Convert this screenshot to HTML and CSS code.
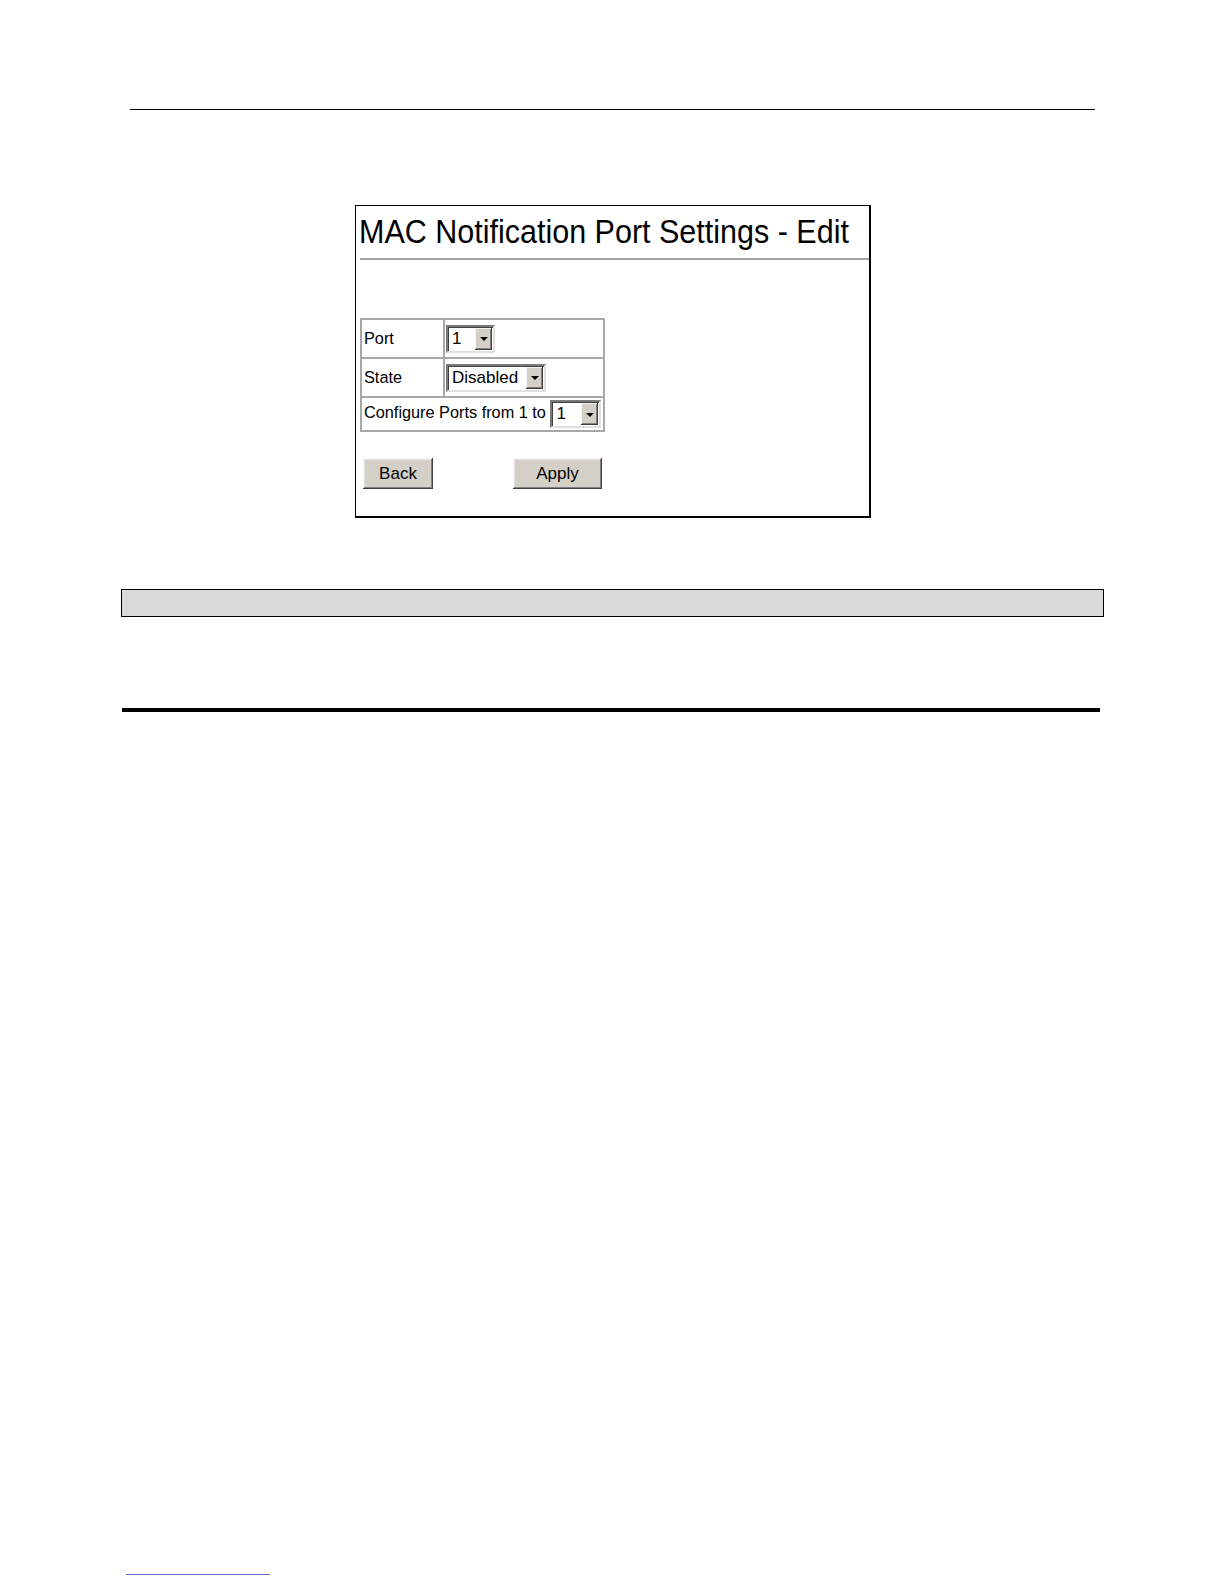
FILE: index.html
```html
<!DOCTYPE html>
<html>
<head>
<meta charset="utf-8">
<title>MAC Notification Port Settings - Edit</title>
<link rel="stylesheet" href="styles.css">
</head>
<body>
<div class="page">
  <div class="toprule"></div>
  <div class="shot">
    <div class="title">MAC Notification Port Settings - Edit</div>
    <div class="title-rule"></div>
    <table class="form">
      <tr class="r1">
        <td class="lbl">Port</td>
        <td class="val"><span class="sel sel-port"><span class="sel-text">1</span><span class="sel-btn"><span class="tri"></span></span></span></td>
      </tr>
      <tr class="r2">
        <td class="lbl">State</td>
        <td class="val"><span class="sel sel-state"><span class="sel-text">Disabled</span><span class="sel-btn"><span class="tri"></span></span></span></td>
      </tr>
      <tr class="r3">
        <td class="cfg" colspan="2">Configure Ports from 1 to <span class="sel sel-cfg"><span class="sel-text">1</span><span class="sel-btn"><span class="tri"></span></span></span></td>
      </tr>
    </table>
    <div class="buttons">
      <button class="btn btn-back">Back</button>
      <button class="btn btn-apply">Apply</button>
    </div>
  </div>
  <div class="bar"></div>
  <div class="rule-thick"></div>
  <div class="footnote-rule"></div>
</div>
</body>
</html>
```
FILE: styles.css
```css
body {
  margin: 0;
  background: #fff;
  font-family: "Liberation Sans", Arial, sans-serif;
  color: #000;
}
.page {
  padding-top: 109px;
}
.toprule {
  margin-left: 130px;
  width: 965px;
  height: 1px;
  background: #000;
}
.shot {
  margin: 95px 0 0 355px;
  width: 516px;
  height: 313px;
  box-sizing: border-box;
  border: 1px solid #000;
  border-right-width: 2px;
  border-bottom-width: 2px;
}
.title {
  font-size: 30.5px;
  line-height: 28px;
  padding: 9px 0 0 3px;
  white-space: nowrap;
  transform: scaleY(1.08);
  transform-origin: 0 0;
}
.title-rule {
  margin: 15px 0 0 4px;
  height: 2px;
  background: #a4a4a4;
}
.form {
  margin: 58px 0 0 4px;
  border-collapse: separate;
  border-spacing: 0;
  border: 1px solid #a8a8a8;
  font-size: 16.3px;
}
.form td {
  border: 1px solid #a8a8a8;
  padding: 0 0 0 2px;
  vertical-align: middle;
  box-sizing: border-box;
  white-space: nowrap;
}
.r1 td { height: 39px; }
.r2 td { height: 39px; }
.r3 td { height: 34px; }
.form td.lbl { width: 83px; }
.form td.val { width: 160px; padding-left: 1px; }
.sel {
  display: inline-flex;
  vertical-align: middle;
  height: 28px;
  box-sizing: border-box;
  background: #fff;
  border-style: solid;
  border-width: 2px;
  border-color: #7a7a7a #e0e0e0 #e0e0e0 #7a7a7a;
  box-shadow: inset 1px 1px #404040;
  padding: 1px;
}
.sel-port { width: 49px; }
.sel-state { width: 100px; }
.sel-cfg { width: 51px; }
.sel-text {
  flex: 1;
  font-size: 17px;
  line-height: 22px;
  padding-left: 3px;
}
.sel-btn {
  width: 17px;
  box-sizing: border-box;
  background: #d4d0c8;
  box-shadow: inset -1px -1px #404040, inset 1px 1px #f4f4f4, inset -2px -2px #808080;
  display: flex;
  align-items: center;
  justify-content: center;
}
.tri {
  width: 0;
  height: 0;
  border-left: 4px solid transparent;
  border-right: 4px solid transparent;
  border-top: 4px solid #000;
  margin-top: 1px;
}
.buttons {
  display: flex;
  gap: 80px;
  margin: 26px 0 0 7px;
}
.btn {
  height: 31px;
  box-sizing: border-box;
  background: #d4d0c8;
  border: none;
  padding: 0;
  font-family: "Liberation Sans", Arial, sans-serif;
  font-size: 17px;
  color: #000;
  box-shadow: inset -1px -1px #404040, inset 1px 1px #f4f4f4, inset -2px -2px #808080, inset 2px 2px #e4e4e4;
}
.btn-back { width: 70px; }
.btn-apply { width: 89px; }
.bar {
  margin: 71px 0 0 121px;
  width: 983px;
  height: 28px;
  box-sizing: border-box;
  border: 1px solid #000;
  background: #d9d9d9;
}
.rule-thick {
  margin: 91px 0 0 122px;
  width: 978px;
  height: 4px;
  background: #000;
}
.footnote-rule {
  margin: 862px 0 0 126px;
  width: 144px;
  height: 1px;
  background: #5a6fb8;
}
```
